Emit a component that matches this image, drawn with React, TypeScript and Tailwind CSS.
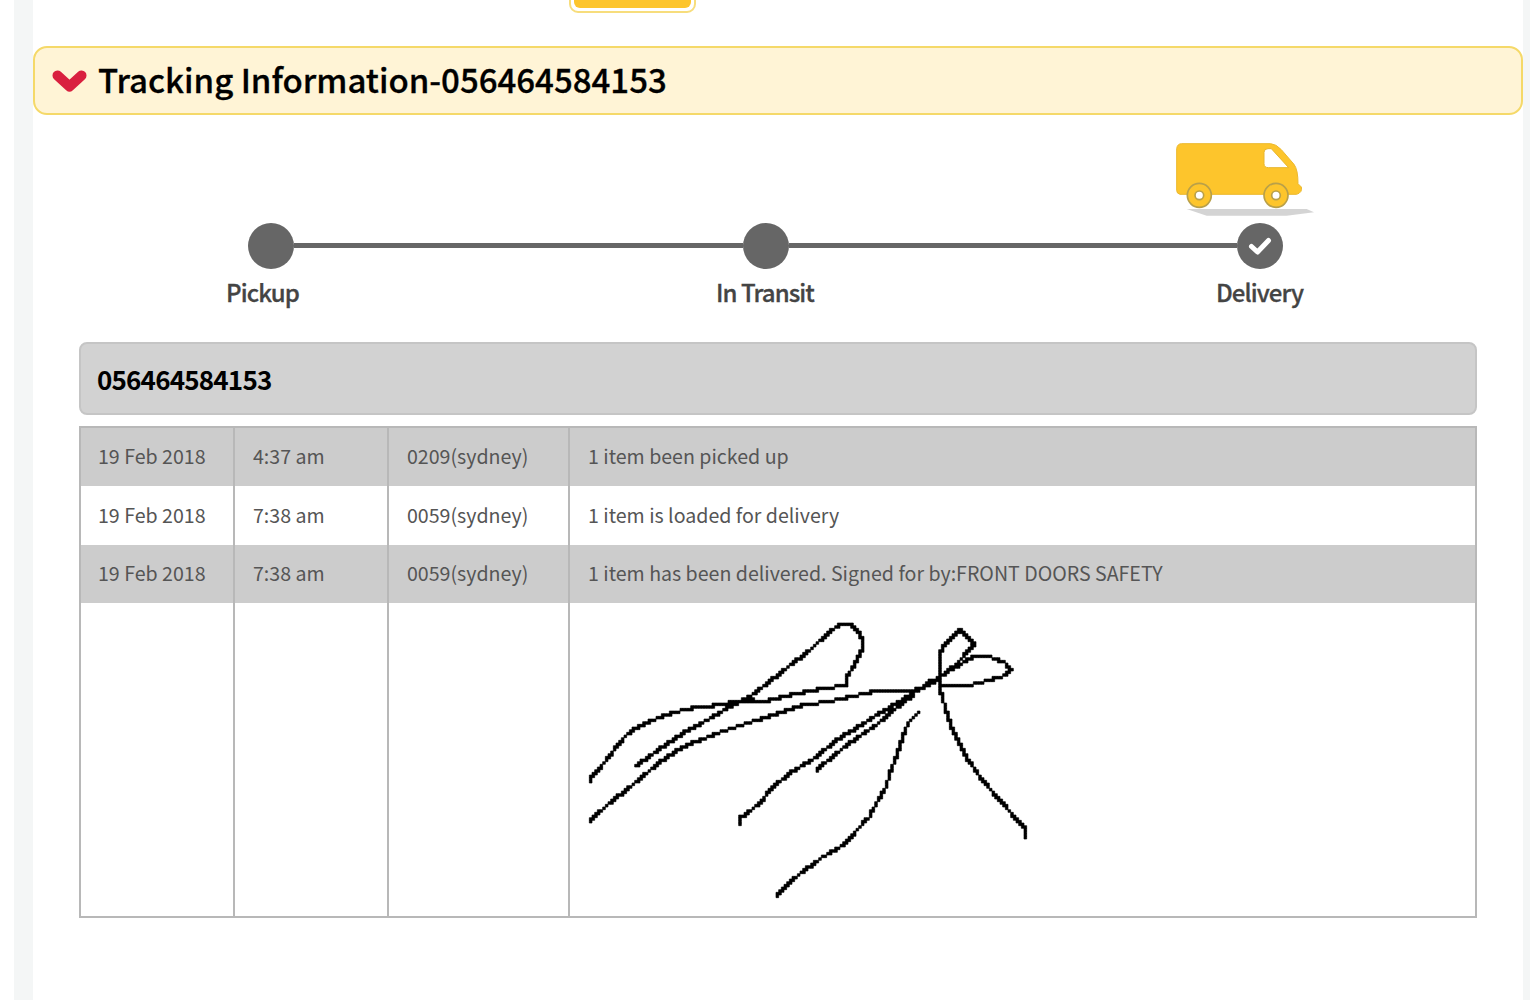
const font = { fontFamily: '"Noto Sans CJK SC", "Noto Sans", sans-serif' };

const rows = [
  { date: "19 Feb 2018", time: "4:37 am", place: "0209(sydney)", text: "1 item been picked up", shaded: true, h: "h-[59px]" },
  { date: "19 Feb 2018", time: "7:38 am", place: "0059(sydney)", text: "1 item is loaded for delivery", shaded: false, h: "h-[59px]" },
  { date: "19 Feb 2018", time: "7:38 am", place: "0059(sydney)", text: "1 item has been delivered. Signed for by:FRONT DOORS SAFETY", shaded: true, h: "h-[58px]" },
];

// pen strokes of the signature, in 3x pixels
const strokes: number[][][] = [
  [[60,540],[110,480],[130,455],[175,400],[210,378],[260,355],[320,335],[380,322],[440,315],[520,300],[600,300],[680,280],[760,265],[830,255],[830,235],[860,185],[880,145],[875,100],[845,70],[815,70],[780,95],[720,150],[650,205],[600,245],[540,290],[490,315],[420,355],[340,400],[280,440],[200,497]],
  [[60,660],[120,610],[200,545],[280,480],[340,440],[440,400],[530,370],[610,345],[700,315],[770,305],[840,290],[910,275],[1010,275],[1050,265],[1085,250],[1120,225],[1160,195],[1215,130],[1170,90],[1125,135],[1110,160],[1110,258],[1200,255],[1260,240],[1310,225],[1325,210],[1305,185],[1260,170],[1210,170],[1150,205],[1090,245],[1020,285],[990,305],[920,345],[850,390],[800,420],[740,470],[660,520],[610,560],[570,610],[510,655],[510,675]],
  [[740,510],[800,460],[860,415],[920,375],[985,320],[1020,290]],
  [[1050,335],[1015,370],[990,440],[965,510],[950,560],[915,620],[900,650],[820,735],[760,770],[680,830],[620,885]],
  [[1110,258],[1130,330],[1150,390],[1190,470],[1240,540],[1310,620],[1370,690],[1365,710]],
  // ink blobs where the lines cross
  [[1000,305],[1030,280]], [[1010,295],[1035,290]], [[1045,272],[1062,262]], [[1075,245],[1098,238]], [[1140,208],[1165,192]], [[480,318],[505,312]], [[525,298],[548,292]],
];

// snap the strokes to a coarse grid so the line has the scanned, stepped look
function signaturePath() {
  const cell = 8;
  const seen = new Set<string>();
  let d = "";
  for (const line of strokes) {
    for (let i = 0; i < line.length - 1; i++) {
      const [x1, y1] = line[i];
      const [x2, y2] = line[i + 1];
      const n = Math.ceil(Math.hypot(x2 - x1, y2 - y1) / 3);
      for (let t = 0; t <= n; t++) {
        const x = Math.round((x1 + ((x2 - x1) * t) / n) / cell) * cell;
        const y = Math.round((y1 + ((y2 - y1) * t) / n) / cell) * cell;
        const key = `${x},${y}`;
        if (seen.has(key)) continue;
        seen.add(key);
        d += `M${x} ${y}h${cell}v${cell}h-${cell}z`;
      }
    }
  }
  return d;
}

function Truck() {
  return (
    <svg width="150" height="80" viewBox="90 20 450 240" className="block">
      <path d="M140,236 H500 L522,246 L440,256 H200 Z" fill="#c9c9c9" opacity="0.8" />
      <path
        d="M125,40 H392 Q408,41 424,58 L462,102 Q474,118 474,160 L484,170 Q488,186 470,192 H120 Q110,190 110,180 V55 Q112,40 125,40 Z"
        fill="#fdc52c"
        stroke="#ecb92e"
        strokeWidth="3"
      />
      <path d="M372,66 Q372,55 384,55 H394 L446,112 H386 Q372,112 372,100 Z" fill="#fff" stroke="#e8b62e" strokeWidth="3" />
      {[178, 408].map((cx) => (
        <g key={cx}>
          <circle cx={cx} cy="195" r="36" fill="#fdc52c" stroke="#b9a049" strokeWidth="5" />
          <circle cx={cx} cy="195" r="13" fill="#fff" stroke="#b9a049" strokeWidth="5" />
        </g>
      ))}
    </svg>
  );
}

function Signature() {
  return (
    <svg width="480" height="310" viewBox="6 12 1440 930" className="block">
      <path d={signaturePath()} fill="#000" stroke="#000" strokeWidth="2" />
    </svg>
  );
}

function Step({ done }: { done?: boolean }) {
  return (
    <div className="flex h-[46px] w-[46px] shrink-0 items-center justify-center rounded-full bg-[#666666]">
      {done && (
        <svg width="24" height="20" viewBox="0 0 24 20">
          <path d="M3.5 10.5 L9.5 16 L20.5 4.5" fill="none" stroke="#fff" strokeWidth="5" strokeLinecap="round" strokeLinejoin="round" />
        </svg>
      )}
    </div>
  );
}

export default function App() {
  return (
    <div className="h-[1000px] overflow-hidden bg-white pl-[14px]" style={font}>
      <div className="h-full bg-[#f4f6f6] pl-[19px] pr-[7px]">
        <div className="h-full bg-white">
          {/* top button, cut off by the page edge */}
          <div className="flex h-[13px] items-end pl-[536px]">
            <div className="h-[33px] w-[127px] shrink-0 rounded-[9px] border-2 border-[#f7dd7c] bg-white p-[3px]">
              <div className="h-full rounded-[6px] bg-[#fdc52c]" />
            </div>
          </div>

          {/* banner */}
          <div className="mt-[33px] flex h-[69px] items-center gap-[11px] rounded-[14px] border-2 border-[#f5d969] bg-[#fff4d6] pl-[17px]">
            <svg width="35" height="23" viewBox="0 0 35 23" className="mt-[1px]">
              <path d="M5.5 5.5 L17.5 16.5 L29.5 5.5" fill="none" stroke="#d9203f" strokeWidth="10" strokeLinecap="round" strokeLinejoin="round" />
            </svg>
            <h1 className="-mt-[2px] text-[33px] leading-none font-medium text-black [-webkit-text-stroke:0.3px_#000]">Tracking Information-056464584153</h1>
          </div>

          {/* progress */}
          <div className="flex justify-end pr-[203px] pt-[22px]">
            <Truck />
          </div>
          <div className="mt-[6px] flex items-center pl-[215px] pr-[240px]">
            <Step />
            <div className="mb-[2px] h-[5px] flex-1 bg-[#666666]" />
            <Step />
            <div className="mb-[2px] h-[5px] flex-1 bg-[#666666]" />
            <Step done />
          </div>
          <div className="mt-[4px] flex h-[38px] items-center pl-[193px] text-[24px] leading-none font-medium tracking-[-0.9px] text-[#444] [-webkit-text-stroke:0.3px_#444]">
            <span>Pickup</span>
            <span className="ml-[417px]">In Transit</span>
            <span className="ml-[402px]">Delivery</span>
          </div>

          <div className="mt-[31px] px-[46px]">
            <div className="flex h-[73px] items-center rounded-lg border-2 border-[#c5c5c5] bg-[#d2d2d2] pl-[16px] text-[26px] font-bold tracking-[-0.8px] text-black">
              056464584153
            </div>

            <table className="mt-[11px] w-full table-fixed border-collapse border-2 border-[#b8b8b8] text-[19.6px] text-[#555]">
              <colgroup>
                <col className="w-[154px]" />
                <col className="w-[154px]" />
                <col className="w-[181px]" />
                <col />
              </colgroup>
              <tbody>
                {rows.map((r, i) => (
                  <tr key={i} className={r.shaded ? `${r.h} bg-[#cccccc]` : `${r.h} bg-white`}>
                    <td className="border-x-2 border-[#b8b8b8] pb-[2px] pl-[17px]">{r.date}</td>
                    <td className="border-x-2 border-[#b8b8b8] pb-[2px] pl-[18px]">{r.time}</td>
                    <td className="border-x-2 border-[#b8b8b8] pb-[2px] pl-[18px]">{r.place}</td>
                    <td className="border-x-2 border-[#b8b8b8] pb-[2px] pl-[18px]">{r.text}</td>
                  </tr>
                ))}
                <tr className="h-[314px]">
                  <td className="border-x-2 border-[#b8b8b8]" />
                  <td className="border-x-2 border-[#b8b8b8]" />
                  <td className="border-x-2 border-[#b8b8b8]" />
                  <td className="border-x-2 border-[#b8b8b8] align-top">
                    <Signature />
                  </td>
                </tr>
              </tbody>
            </table>
          </div>
        </div>
      </div>
    </div>
  );
}
